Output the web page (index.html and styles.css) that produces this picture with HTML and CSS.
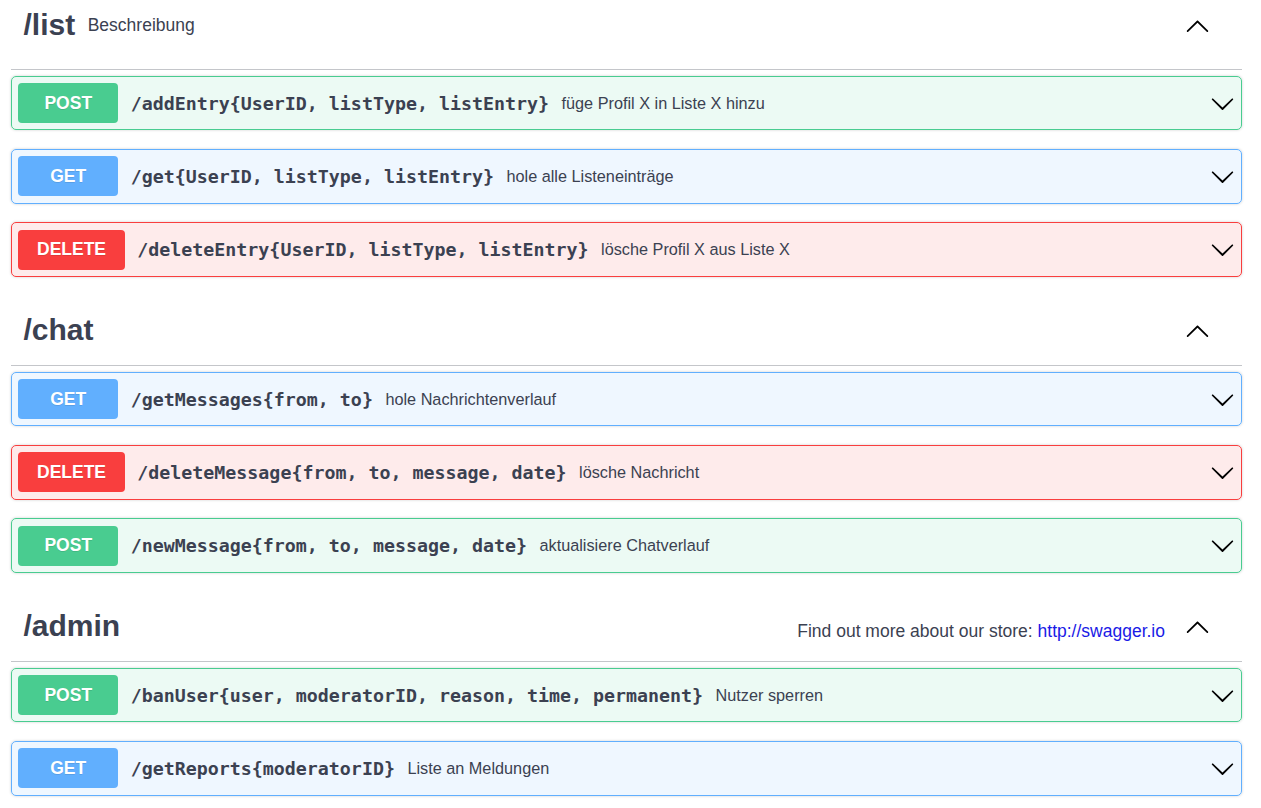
FILE: index.html
```html
<!DOCTYPE html>
<html lang="de">
<head>
<meta charset="utf-8">
<title>API</title>
<link rel="stylesheet" href="styles.css">
</head>
<body>
<div class="wrapper">

  <section class="tag-section">
    <div class="tag-header tag-header--first">
      <h3 class="tag-title"><span class="tag-name">/list</span><small class="tag-desc">Beschreibung</small></h3>
      <svg class="tag-arrow" viewBox="0 0 20 20"><path d="M17.418 14.908c.272.268.709.268.979 0s.271-.701 0-.969l-7.908-7.83c-.27-.268-.707-.268-.979 0l-7.908 7.83c-.27.268-.27.701 0 .969.271.268.709.268.979 0L10 7.718z"/></svg>
    </div>
    <div class="opblock opblock--post">
      <span class="method">POST</span>
      <span class="path">/addEntry{UserID, listType, listEntry}</span>
      <span class="desc">füge Profil X in Liste X hinzu</span>
      <svg class="op-arrow" viewBox="0 0 20 20"><path d="M17.418 6.109c.272-.268.709-.268.979 0s.271.701 0 .969l-7.908 7.83c-.27.268-.707.268-.979 0l-7.908-7.830c-.27-.268-.27-.701 0-.969.271-.268.709-.268.979 0L10 13.25l7.418-7.141z"/></svg>
    </div>
    <div class="opblock opblock--get">
      <span class="method">GET</span>
      <span class="path">/get{UserID, listType, listEntry}</span>
      <span class="desc">hole alle Listeneinträge</span>
      <svg class="op-arrow" viewBox="0 0 20 20"><path d="M17.418 6.109c.272-.268.709-.268.979 0s.271.701 0 .969l-7.908 7.83c-.27.268-.707.268-.979 0l-7.908-7.83c-.27-.268-.27-.701 0-.969.271-.268.709-.268.979 0L10 13.25l7.418-7.141z"/></svg>
    </div>
    <div class="opblock opblock--delete">
      <span class="method">DELETE</span>
      <span class="path">/deleteEntry{UserID, listType, listEntry}</span>
      <span class="desc">lösche Profil X aus Liste X</span>
      <svg class="op-arrow" viewBox="0 0 20 20"><path d="M17.418 6.109c.272-.268.709-.268.979 0s.271.701 0 .969l-7.908 7.83c-.27.268-.707.268-.979 0l-7.908-7.83c-.27-.268-.27-.701 0-.969.271-.268.709-.268.979 0L10 13.25l7.418-7.141z"/></svg>
    </div>
  </section>

  <section class="tag-section">
    <div class="tag-header">
      <h3 class="tag-title"><span class="tag-name">/chat</span></h3>
      <svg class="tag-arrow" viewBox="0 0 20 20"><path d="M17.418 14.908c.272.268.709.268.979 0s.271-.701 0-.969l-7.908-7.83c-.27-.268-.707-.268-.979 0l-7.908 7.83c-.27.268-.27.701 0 .969.271.268.709.268.979 0L10 7.718z"/></svg>
    </div>
    <div class="opblock opblock--get">
      <span class="method">GET</span>
      <span class="path">/getMessages{from, to}</span>
      <span class="desc">hole Nachrichtenverlauf</span>
      <svg class="op-arrow" viewBox="0 0 20 20"><path d="M17.418 6.109c.272-.268.709-.268.979 0s.271.701 0 .969l-7.908 7.83c-.27.268-.707.268-.979 0l-7.908-7.83c-.27-.268-.27-.701 0-.969.271-.268.709-.268.979 0L10 13.25l7.418-7.141z"/></svg>
    </div>
    <div class="opblock opblock--delete">
      <span class="method">DELETE</span>
      <span class="path">/deleteMessage{from, to, message, date}</span>
      <span class="desc">lösche Nachricht</span>
      <svg class="op-arrow" viewBox="0 0 20 20"><path d="M17.418 6.109c.272-.268.709-.268.979 0s.271.701 0 .969l-7.908 7.83c-.27.268-.707.268-.979 0l-7.908-7.83c-.27-.268-.27-.701 0-.969.271-.268.709-.268.979 0L10 13.25l7.418-7.141z"/></svg>
    </div>
    <div class="opblock opblock--post">
      <span class="method">POST</span>
      <span class="path">/newMessage{from, to, message, date}</span>
      <span class="desc">aktualisiere Chatverlauf</span>
      <svg class="op-arrow" viewBox="0 0 20 20"><path d="M17.418 6.109c.272-.268.709-.268.979 0s.271.701 0 .969l-7.908 7.83c-.27.268-.707.268-.979 0l-7.908-7.83c-.27-.268-.27-.701 0-.969.271-.268.709-.268.979 0L10 13.25l7.418-7.141z"/></svg>
    </div>
  </section>

  <section class="tag-section">
    <div class="tag-header">
      <h3 class="tag-title"><span class="tag-name">/admin</span></h3>
      <div class="tag-docs">Find out more about our store: <a class="tag-link" href="#">http://swagger.io</a></div>
      <svg class="tag-arrow" viewBox="0 0 20 20"><path d="M17.418 14.908c.272.268.709.268.979 0s.271-.701 0-.969l-7.908-7.83c-.27-.268-.707-.268-.979 0l-7.908 7.83c-.27.268-.27.701 0 .969.271.268.709.268.979 0L10 7.718z"/></svg>
    </div>
    <div class="opblock opblock--post">
      <span class="method">POST</span>
      <span class="path">/banUser{user, moderatorID, reason, time, permanent}</span>
      <span class="desc">Nutzer sperren</span>
      <svg class="op-arrow" viewBox="0 0 20 20"><path d="M17.418 6.109c.272-.268.709-.268.979 0s.271.701 0 .969l-7.908 7.83c-.27.268-.707.268-.979 0l-7.908-7.83c-.27-.268-.27-.701 0-.969.271-.268.709-.268.979 0L10 13.25l7.418-7.141z"/></svg>
    </div>
    <div class="opblock opblock--get">
      <span class="method">GET</span>
      <span class="path">/getReports{moderatorID}</span>
      <span class="desc">Liste an Meldungen</span>
      <svg class="op-arrow" viewBox="0 0 20 20"><path d="M17.418 6.109c.272-.268.709-.268.979 0s.271.701 0 .969l-7.908 7.83c-.27.268-.707.268-.979 0l-7.908-7.83c-.27-.268-.27-.701 0-.969.271-.268.709-.268.979 0L10 13.25l7.418-7.141z"/></svg>
    </div>
  </section>

</div>
</body>
</html>
```

FILE: styles.css
```css
html, body {
  margin: 0;
  padding: 0;
  background: #ffffff;
}

body {
  font-family: "Liberation Sans", Arial, sans-serif;
  color: #3b4151;
  overflow: hidden;
}

.wrapper {
  margin-left: 11px;
  width: 1231px;
}

.tag-section {
  display: flex;
  flex-direction: column;
}

.tag-header {
  box-sizing: border-box;
  height: 70px;
  display: flex;
  align-items: center;
  padding: 0 32px 0 12.5px;
  border-bottom: 1px solid rgba(59, 65, 81, 0.3);
  margin-bottom: 6.25px;
}

.tag-header--first {
  height: 69.5px;
  padding-bottom: 18px;
}

.tag-title {
  flex: 1 1 auto;
  display: flex;
  align-items: center;
  margin: 0;
  font-weight: 700;
}

.tag-name {
  font-size: 30px;
  font-weight: 700;
  color: #3b4151;
}

.tag-desc {
  font-size: 17.5px;
  font-weight: 400;
  padding: 0 12.5px;
  color: #3b4151;
}

.tag-docs {
  font-size: 17.5px;
  color: #3b4151;
  margin-right: 20px;
  padding-top: 10px;
  white-space: nowrap;
}

.tag-link {
  color: #1a1ae6;
  text-decoration: none;
}

.tag-arrow {
  width: 25px;
  height: 25px;
  flex: 0 0 auto;
  fill: #000;
}

.opblock {
  box-sizing: border-box;
  display: flex;
  align-items: center;
  padding: 6.25px;
  margin-bottom: 18.75px;
  border: 1px solid;
  border-radius: 5px;
  box-shadow: 0 0 3px rgba(0, 0, 0, 0.19);
}

.opblock--post {
  border-color: #49cc90;
  background: rgba(73, 204, 144, 0.1);
}

.opblock--get {
  border-color: #61affe;
  background: rgba(97, 175, 254, 0.1);
}

.opblock--delete {
  border-color: #f93e3e;
  background: rgba(249, 62, 62, 0.1);
}

.method {
  box-sizing: border-box;
  min-width: 100px;
  height: 40px;
  padding: 0 18.75px;
  display: flex;
  align-items: center;
  justify-content: center;
  border-radius: 4px;
  color: #fff;
  font-family: "Liberation Sans", Arial, sans-serif;
  font-size: 17.5px;
  font-weight: 700;
  text-shadow: 0 1px 0 rgba(0, 0, 0, 0.1);
}

.opblock--post .method { background: #49cc90; }
.opblock--get .method { background: #61affe; }
.opblock--delete .method { background: #f93e3e; }

.path {
  padding: 0 12.5px;
  font-family: "DejaVu Sans Mono", "Liberation Mono", monospace;
  font-size: 18.3px;
  font-weight: 700;
  color: #3b4151;
  white-space: nowrap;
}

.desc {
  flex: 1 1 auto;
  font-size: 16.25px;
  color: #3b4151;
}

.op-arrow {
  width: 25px;
  height: 25px;
  flex: 0 0 auto;
  fill: #000;
}
```
